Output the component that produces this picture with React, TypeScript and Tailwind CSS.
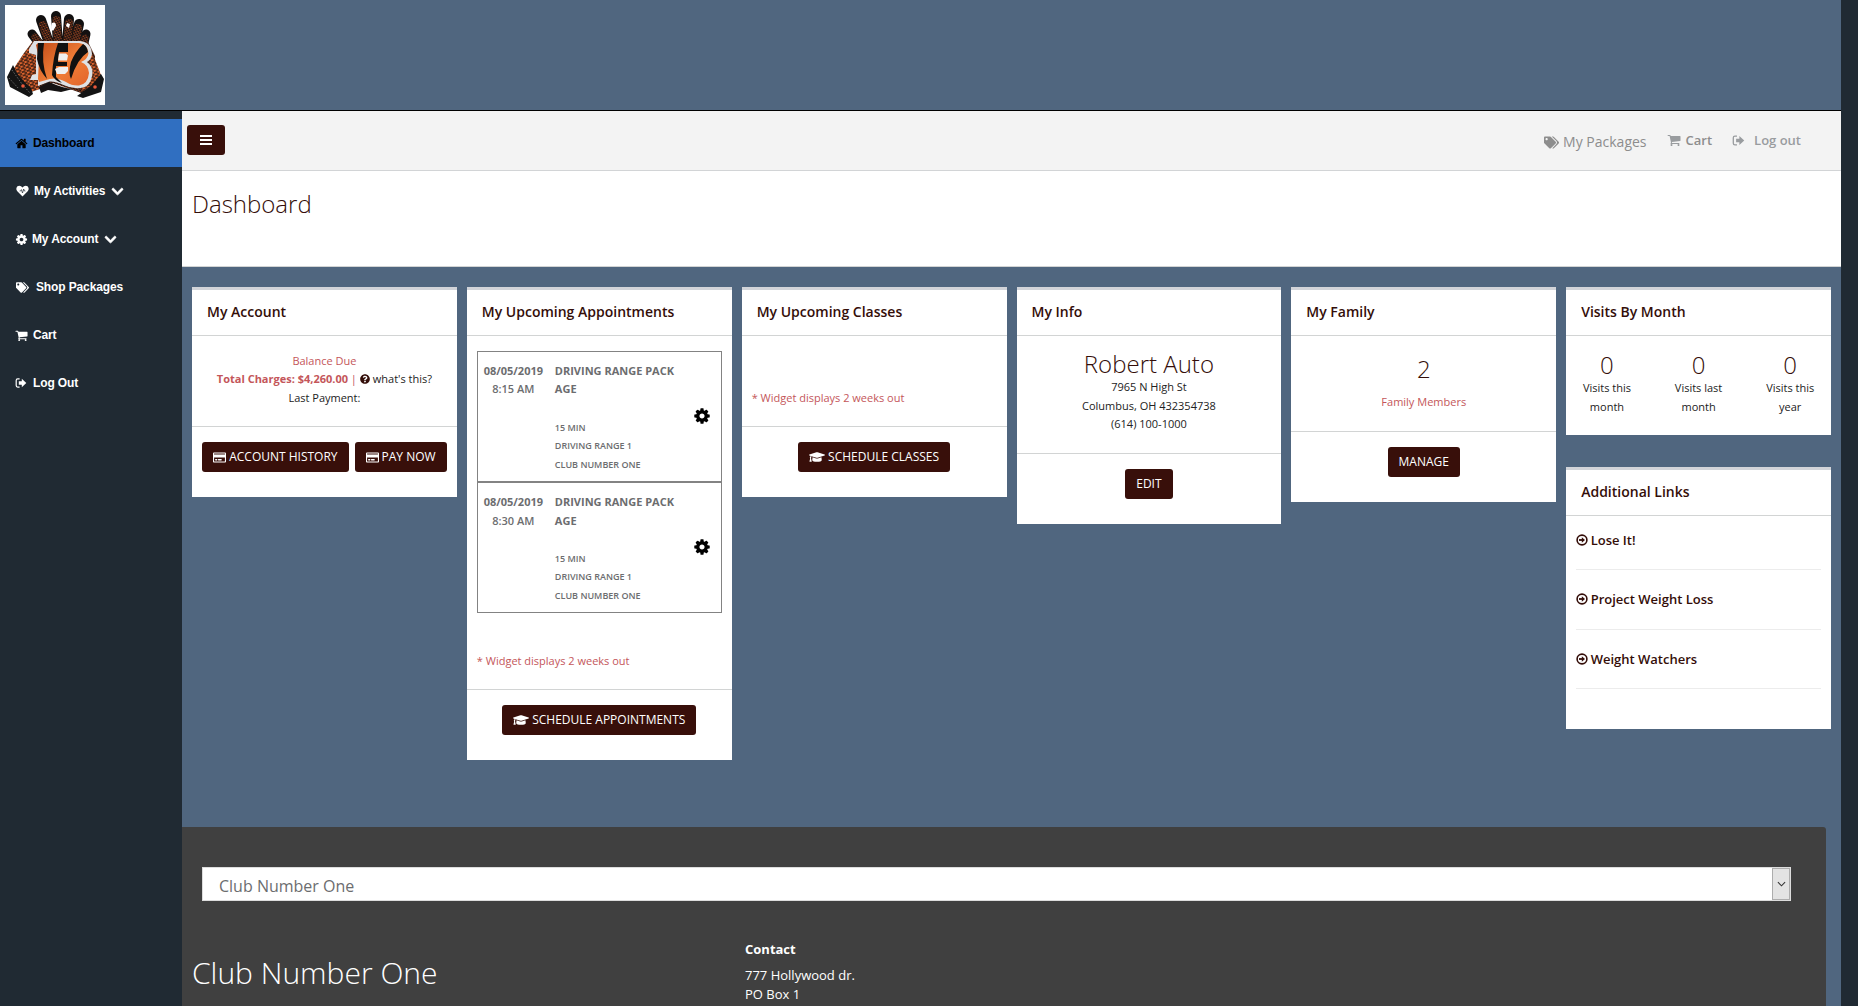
import React from "react";
import {
  FaTags,
  FaChevronDown,
  FaRegCreditCard,
  FaGraduationCap,
  FaQuestionCircle,
} from "react-icons/fa";

function SolidIcon({ d, className = "" }: { d: string; className?: string }) {
  return (
    <svg viewBox="0 0 1792 1792" className={"shrink-0 " + className} fill="currentColor">
      <path d={d} />
    </svg>
  );
}

const HOME =
  "M1472 992v480q0 26-19 45t-45 19h-384v-384h-256v384h-384q-26 0-45-19t-19-45v-480q0-1 .5-3t.5-3l575-474 575 474q1 2 1 6zm223-69l-62 74q-8 9-21 11h-3q-13 0-21-7l-692-577-692 577q-12 8-24 7-13-2-21-11l-62-74q-8-10-7-23.5t11-21.5l719-599q32-26 76-26t76 26l244 204v-195q0-14 9-23t23-9h192q14 0 23 9t9 23v408l219 182q10 8 11 21.5t-7 23.5z";
const COG =
  "M1152 896q0-106-75-181t-181-75-181 75-75 181 75 181 181 75 181-75 75-181zm512-109v222q0 12-8 23t-20 13l-185 28q-19 54-39 91 35 50 107 138 10 12 10 25t-9 23q-27 37-99 108t-94 71q-12 0-26-9l-138-108q-44 23-91 38-16 136-29 186-7 28-36 28h-222q-14 0-24.5-8.5t-11.5-21.5l-28-184q-49-16-90-37l-141 107q-10 9-25 9-14 0-25-11-126-114-165-168-7-10-7-23 0-12 8-23 15-21 51-66.5t54-70.5q-27-50-41-99l-183-27q-13-2-21-12.5t-8-23.5v-222q0-12 8-23t19-13l186-28q14-46 39-92-40-57-107-138-10-12-10-24 0-10 9-23 26-36 98.5-107.5t94.5-71.5q13 0 26 10l138 107q44-23 91-38 16-136 29-186 7-28 36-28h222q14 0 24.5 8.5t11.5 21.5l28 184q49 16 90 37l142-107q9-9 24-9 13 0 25 10 129 119 165 170 7 8 7 22 0 12-8 23-15 21-51 66.5t-54 70.5q26 50 41 98l183 28q13 2 21 12.5t8 23.5z";
const CART =
  "M704 1536q0 52-38 90t-90 38-90-38-38-90 38-90 90-38 90 38 38 90zm896 0q0 52-38 90t-90 38-90-38-38-90 38-90 90-38 90 38 38 90zm128-1088v512q0 24-16.5 42.5t-40.5 21.5l-1044 122q13 60 13 70 0 16-24 64h920q26 0 45 19t19 45-19 45-45 19h-1024q-26 0-45-19t-19-45q0-11 8-31.5t16-36 21.5-40 15.5-29.5l-177-823h-204q-26 0-45-19t-19-45 19-45 45-19h256q16 0 28.5 6.5t19.5 15.5 13 24.5 8 26 5.5 29.5 4.5 26h1201q26 0 45 19t19 45z";

function HeartIcon() {
  return (
    <svg viewBox="0 0 13 12" className="h-3 w-[13px] shrink-0">
      <path d="M6.5 11.5 1.3 6.3Q0 4.8.4 3 1 .9 3.3.8 5.2.8 6.5 2.6 7.8.8 9.7.8 12 .9 12.6 3q.4 1.8-.9 3.3z" fill="currentColor" />
      <path d="M3.600 6H4.600L5.400 4.600 6.500 8 7.700 4 8.400 6H9.400" fill="none" stroke="#202a33" strokeWidth=".7" />
    </svg>
  );
}

function SignOutIcon({ className = "" }: { className?: string }) {
  return (
    <svg viewBox="0 0 12 12" className={className} fill="none">
      <path d="M4.6 1.9H2.7Q1.2 1.9 1.2 3.4v5.2q0 1.5 1.5 1.5h1.9" stroke="currentColor" strokeWidth="1.2" />
      <path d="M3.8 4.3h3V1.8L11.3 6 6.8 10.2V7.7h-3z" fill="currentColor" />
    </svg>
  );
}

function ArrowCircle() {
  return (
    <svg viewBox="0 0 12 12" className="mr-[3px] -ml-[0.5px] h-3 w-3 shrink-0" fill="none" stroke="currentColor">
      <circle cx="6" cy="6" r="4.9" strokeWidth="1.6" />
      <path d="M3 6h4" strokeWidth="1.8" />
      <path d="M5.8 3.2 9 6 5.8 8.8z" fill="currentColor" stroke="none" />
    </svg>
  );
}

function Logo() {
  return (
    <svg viewBox="0 0 100 100" className="block h-[100px] w-[100px] bg-white">
      <defs>
        <pattern id="knit" width="3.4" height="3" patternUnits="userSpaceOnUse" patternTransform="rotate(18)">
          <rect width="3.4" height="3" fill="#14100f" />
          <path d="M0 1h2M2 2.5h1.4" stroke="#d85c2b" strokeWidth=".8" />
        </pattern>
        <pattern id="mesh" width="5" height="3.6" patternUnits="userSpaceOnUse" patternTransform="rotate(-14)">
          <rect width="5" height="3.6" fill="#e0652e" />
          <path d="M0 .9h3.6M2.5 2.7h2.5" stroke="#1b110d" strokeWidth="1.3" />
        </pattern>
        <linearGradient id="orange" x1="0" y1="0" x2="1" y2="1">
          <stop offset="0" stopColor="#c24c18" />
          <stop offset="0.55" stopColor="#f07e38" />
          <stop offset="1" stopColor="#e2642a" />
        </linearGradient>
      </defs>
      <g fill="none" stroke="#121010" strokeLinecap="round">
        <path d="M27 29 36 41M81 29 78 42" strokeWidth="9" />
        <path d="M36 15 44 38M51 11 53 38M64 14 62 38M74 19 70 38" strokeWidth="10" />
      </g>
      <g fill="none" stroke="url(#knit)" strokeLinecap="round">
        <path d="M30 32 38 43M80 33 77 44" strokeWidth="7" />
        <path d="M38 20 45 40M51.500 15 53 40M64 18 62 40M73 23 70 40" strokeWidth="8" />
      </g>
      <path d="M28 35h54l8 16-2 36-12 1-14-5-14-5-16 6-8-4z" fill="url(#knit)" />
      <path d="m28 36-9 12-8 12-5 9 20 18 9-3V38z" fill="url(#mesh)" />
      <path d="m83 42 6 10 7 18-8 10-12 6 8-20z" fill="url(#mesh)" />
      <path d="m8 60-6 12 3 10 19 10 4-3-2-6q-9-8-14-15zM96 69l3 5-3 13-18 6-6-2 14-10z" fill="#141414" />
      <path d="m7 65 10 14 8 9M4 73l10 11" fill="none" stroke="#8a8a8a" strokeWidth=".7" strokeDasharray="1.500 1.500" />
      <path d="m34 82 10-5q16 7 24 7l-12 3-13-2-7 3z" fill="#151313" />
      <path
        d="M24 44 29 36H75q11 1 12 13-.5 5-5 8 5.500 4 5.500 11-1.500 14-12 15-9 1-17-3-8-4-14-3.500L33 81v-6h-8l2-5 4-1V50l-7-2z"
        fill="#dfe2e5"
      />
      <path
        d="M31 40 33 38H74q9 1 9.500 10.500-1 6-7.500 8.500 7.500 3 8 11-1 11-10 12.500-7 .5-13-3.500-9-5-16-3l-11 3-1-3 1-20z"
        fill="url(#orange)"
      />
      <path d="M33 38h6q-3 19 3 36-8-9-10-20zM53 38h10v9h-9l-1 10h9v4H51v11l6 6q-8-3-10-8 1-18 6-32zM78 39q4 2 5 8-11 7-17 27-3-6 0-17 4-10 12-18z" fill="#121110" />
      <path d="M54 48.500h7l2 2-1 5h-9zM50 64l4-2h9v4l-3 3h-8z" fill="#f0f0f0" />
      <path d="M47 18q4-2 4 3l-3 5q-3-2-1-8zM62 18l3 1-1 4-3-2z" fill="#fff" />
      <circle cx="18" cy="81" r="1.800" fill="#e9583b" />
      <circle cx="90" cy="82" r="1.800" fill="#e9583b" />
    </svg>
  );
}

function NavItem({
  icon,
  label,
  active,
  menu,
  gap,
}: {
  icon: React.ReactNode;
  label: string;
  active?: boolean;
  menu?: boolean;
  gap?: string;
}) {
  return (
    <a
      className={
        "flex h-12 items-center pl-4 text-xs font-bold tracking-[-0.13px] " +
        (active ? "bg-[#306fc1] text-black" : "text-white")
      }
    >
      {icon}
      <span className={gap || "ml-[6px]"}>{label}</span>
      {menu && <FaChevronDown className="ml-[6px] stroke-current stroke-[28px] text-[13px]" />}
    </a>
  );
}

function Card({ title, className = "", children }: { title: string; className?: string; children: React.ReactNode }) {
  return (
    <section className={"flex flex-col border-t-[3px] border-[#d2d4d9] bg-white " + className}>
      <h2 className="h-[46px] shrink-0 border-b border-[#d2d4d4] pl-[15px] pt-[12px] text-sm leading-5 font-semibold text-[#340e09]">
        {title}
      </h2>
      {children}
    </section>
  );
}

function Button({ icon, children }: { icon?: React.ReactNode; children: React.ReactNode }) {
  return (
    <button className="flex h-[30px] items-center gap-[3px] rounded-[3px] bg-[#380f0a] px-[11px] text-xs text-white">
      {icon}
      <span>{children}</span>
    </button>
  );
}

function Actions({ children }: { children: React.ReactNode }) {
  return (
    <div className="flex justify-center gap-[6px] border-t border-[#d2d4d4] pt-[15px] pb-[25px]">{children}</div>
  );
}

function Appointment({ time }: { time: string }) {
  return (
    <div className="flex h-[131.3px] border border-[#838383] pt-[9.75px] text-[11px] leading-[18.57px] text-[#6c6d6f] last-of-type:h-[131px]">
      <div className="ml-[5.5px] w-[60px] text-center font-semibold">
        <div className="font-bold">08/05/2019</div>
        <div>{time}</div>
      </div>
      <div className="ml-[11.5px] w-[130px] font-semibold">
        <div className="font-bold">
          DRIVING RANGE PACK
          <br />
          AGE
        </div>
        <div className="mt-[19.66px] text-[9px]">
          15 MIN
          <br />
          DRIVING RANGE 1
          <br />
          CLUB NUMBER ONE
        </div>
      </div>
      <SolidIcon d={COG} className="mt-[45px] ml-[8px] h-[18px] w-[18px] text-black" />
    </div>
  );
}

const visits = [
  ["Visits this", "month"],
  ["Visits last", "month"],
  ["Visits this", "year"],
];

const links = ["Lose It!", "Project Weight Loss", "Weight Watchers"];

export default function App() {
  return (
    <div className="h-[1006px] w-[1858px] overflow-hidden bg-[#202a33] font-['Open_Sans',sans-serif] text-[11px] leading-[18.57px] text-[#222]">
      <header className="h-[111px] w-[1841px] border-b border-black bg-[#50667f] p-[5px]">
        <Logo />
      </header>
      <div className="flex w-[1841px]">
        <nav className="w-[182px] shrink-0 pt-2 font-['Liberation_Sans',sans-serif]">
          <NavItem icon={<SolidIcon d={HOME} className="-ml-px h-[13px] w-[13px]" />} label="Dashboard" active gap="ml-[5px]" />
          <NavItem icon={<HeartIcon />} label="My Activities" menu gap="ml-[5px]" />
          <NavItem icon={<SolidIcon d={COG} className="-ml-px h-[13px] w-[13px]" />} label="My Account" menu gap="ml-[4px]" />
          <NavItem icon={<FaTags className="text-[13px]" />} label="Shop Packages" gap="ml-[7px]" />
          <NavItem icon={<SolidIcon d={CART} className="-ml-px h-[13px] w-[13px]" />} label="Cart" gap="ml-[5px]" />
          <NavItem icon={<SignOutIcon className="-ml-px h-3 w-3" />} label="Log Out" />
        </nav>
        <main className="flex h-[895px] w-[1659px] flex-col bg-[#50667f]">
          <div className="flex h-[60px] shrink-0 items-start border-b border-[#d2d4d6] bg-[#f3f3f3] pt-[14px] pr-10 pl-[5px] text-[#8d8d8d]">
            <button className="flex h-[30px] w-[38px] flex-col items-center justify-center gap-[2px] rounded-[3px] bg-[#380f0a]">
              <span className="h-[2px] w-[12px] bg-white" />
              <span className="h-[2px] w-[12px] bg-white" />
              <span className="h-[2px] w-[12px] bg-white" />
            </button>
            <div className="ml-auto flex h-[32px] items-center pt-[2px] text-sm">
              <FaTags className="mr-1 text-[15px]" />
              My Packages
            </div>
            <div className="ml-[20px] flex h-[30px] items-center text-[13px] font-semibold">
              <SolidIcon d={CART} className="mr-[5px] h-[14px] w-[14px] text-[#999c9f]" />
              Cart
            </div>
            <div className="ml-[20px] flex h-[30px] items-center text-[13px] font-semibold text-[#999c9f]">
              <SignOutIcon className="mr-[9px] h-[13px] w-[13px]" />
              Log out
            </div>
          </div>
          <div className="h-24 shrink-0 border-b border-[#d2d4d4] bg-white pt-[16px] pl-[10px]">
            <h1 className="text-2xl leading-[34px] font-light text-[#340e09]">Dashboard</h1>
          </div>
          <div className="grid h-[560px] shrink-0 grid-cols-6 items-start gap-[10px] px-[10px] pt-5">
            <Card title="My Account">
              <div className="h-[90px] pt-[15.6px] text-center">
                <div className="text-[#c4565a]">Balance Due</div>
                <div className="flex items-center justify-center whitespace-pre text-[#c4565a]">
                  <b>Total Charges: $4,260.00</b> |{" "}
                  <FaQuestionCircle className="mr-[3px] text-[10px] text-[#340e09]" />
                  <span className="text-[#222]">what's this?</span>
                </div>
                <div>Last Payment:</div>
              </div>
              <Actions>
                <Button icon={<FaRegCreditCard className="text-[13px]" />}>ACCOUNT HISTORY</Button>
                <Button icon={<FaRegCreditCard className="text-[13px]" />}>PAY NOW</Button>
              </Actions>
            </Card>

            <Card title="My Upcoming Appointments">
              <div className="h-[353px] px-[10px] pt-[15px]">
                <div className="h-[262px]">
                  <Appointment time="8:15 AM" />
                  <Appointment time="8:30 AM" />
                </div>
                <div className="mt-[39px] text-[#c4565a]">* Widget displays 2 weeks out</div>
              </div>
              <Actions>
                <Button icon={<FaGraduationCap className="text-[16px]" />}>SCHEDULE APPOINTMENTS</Button>
              </Actions>
            </Card>

            <Card title="My Upcoming Classes">
              <div className="h-[90px] px-[10px] pt-[53px] text-[#c4565a]">* Widget displays 2 weeks out</div>
              <Actions>
                <Button icon={<FaGraduationCap className="text-[16px]" />}>SCHEDULE CLASSES</Button>
              </Actions>
            </Card>

            <Card title="My Info">
              <div className="h-[117px] pt-[15px] text-center">
                <div className="mb-px text-2xl leading-[26px] font-light text-[#340e09]">Robert Auto</div>
                <div>7965 N High St</div>
                <div>Columbus, OH 432354738</div>
                <div>(614) 100-1000</div>
              </div>
              <Actions>
                <Button>EDIT</Button>
              </Actions>
            </Card>

            <Card title="My Family">
              <div className="h-[95px] pt-[20px] text-center text-[#c4565a]">
                <div className="mb-[11px] text-2xl leading-[26px] font-light text-[#340e09]">2</div>
                Family Members
              </div>
              <Actions>
                <Button>MANAGE</Button>
              </Actions>
            </Card>

            <div className="flex flex-col gap-8">
              <Card title="Visits By Month" className="h-[148px]">
                <div className="-mx-[5px] grid grid-cols-3 pt-[16px] text-center">
                  {visits.map(([a, b], i) => (
                    <div key={i}>
                      <div className="mb-[1px] text-2xl leading-[26px] font-light text-[#340e09]">0</div>
                      {a}
                      <br />
                      {b}
                    </div>
                  ))}
                </div>
              </Card>
              <Card title="Additional Links" className="h-[262px]">
                <div className="px-[10px] text-[13px] font-semibold text-[#340e09]">
                  {links.map((label, i) => (
                    <a
                      key={label}
                      className={
                        "flex items-start border-b border-[#ececec] " +
                        (i === 0 ? "h-[54px] pt-[15px]" : i === 1 ? "h-[60px] pt-[20px]" : "h-[59px] pt-[20px]")
                      }
                    >
                      <span className="flex items-center">
                        <ArrowCircle />
                        {label}
                      </span>
                    </a>
                  ))}
                </div>
              </Card>
            </div>
          </div>

          <footer className="h-[179px] w-[1644px] shrink-0 rounded-tr-[3px] bg-[#404040] pt-10 text-[13px] text-white">
            <div className="ml-5 flex h-[34px] w-[1589px] items-center justify-between border border-[#ddd] bg-white pl-4 text-base text-[#6c6d6f]">
              <span className="pt-1">Club Number One</span>
              <span className="flex h-8 w-[18px] items-center justify-center border border-[#adadad] bg-[#e3e3e3] text-[#333]">
                <svg viewBox="0 0 10 6" className="h-[6px] w-[9px]" fill="none" stroke="currentColor" strokeWidth="1.2">
                  <path d="m1 1 4 4 4-4" />
                </svg>
              </span>
            </div>
            <div className="grid grid-cols-[553px_1fr] pl-[10px]">
              <h2 className="pt-[50px] text-[30px] leading-[43px] font-light">Club Number One</h2>
              <div className="pt-[38.6px]">
                <div className="mb-[7.8px] font-bold">Contact</div>
                <div>777 Hollywood dr.</div>
                <div>PO Box 1</div>
              </div>
            </div>
          </footer>
        </main>
      </div>
    </div>
  );
}
